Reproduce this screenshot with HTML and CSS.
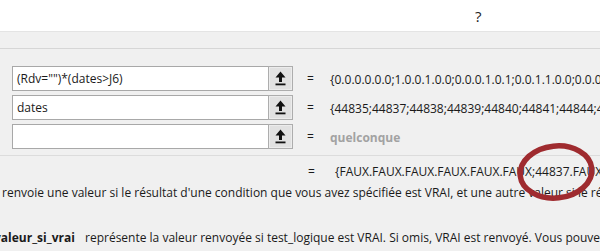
FILE: index.html
```html
<!DOCTYPE html>
<html lang="fr">
<head>
<meta charset="utf-8">
<title>Arguments de la fonction</title>
<link rel="stylesheet" href="styles.css">
</head>
<body>
<div class="dialog">
  <div class="top"><span class="help">?</span></div>
  <div class="band"></div>
  <div class="args">
    <div class="row">
      <div class="field"><span class="ftext">(Rdv="")*(dates&gt;J6)</span></div>
      <div class="pick"><svg width="11" height="15" viewBox="0 0 11 15"><path d="M5.5 0.5 L10.5 6.5 L7 6.5 L7 11 L4 11 L4 6.5 L0.5 6.5 Z" fill="#111"/><rect x="0.5" y="12.5" width="10" height="1.8" fill="#111"/></svg></div>
      <span class="eq">=</span>
      <span class="val">{0.0.0.0.0.0;1.0.0.1.0.0;0.0.0.1.0.1;0.0.1.1.0.0;0.0.0.0.0.0;0.0.0.0.0.0}</span>
    </div>
    <div class="row">
      <div class="field"><span class="ftext">dates</span></div>
      <div class="pick"><svg width="11" height="15" viewBox="0 0 11 15"><path d="M5.5 0.5 L10.5 6.5 L7 6.5 L7 11 L4 11 L4 6.5 L0.5 6.5 Z" fill="#111"/><rect x="0.5" y="12.5" width="10" height="1.8" fill="#111"/></svg></div>
      <span class="eq">=</span>
      <span class="val">{44835;44837;44838;44839;44840;44841;44844;44845;44846;44847}</span>
    </div>
    <div class="row">
      <div class="field"><span class="ftext"></span></div>
      <div class="pick"><svg width="11" height="15" viewBox="0 0 11 15"><path d="M5.5 0.5 L10.5 6.5 L7 6.5 L7 11 L4 11 L4 6.5 L0.5 6.5 Z" fill="#111"/><rect x="0.5" y="12.5" width="10" height="1.8" fill="#111"/></svg></div>
      <span class="eq">=</span>
      <span class="val any">quelconque</span>
    </div>
  </div>
  <div class="result"><span class="eq">=</span><span class="val">{FAUX.FAUX.FAUX.FAUX.FAUX.FAUX;44837.FAUX.FAUX.FAUX.FAUX.FAUX}</span></div>
  <p class="desc">renvoie une valeur si le résultat d'une condition que vous avez spécifiée est VRAI, et une autre valeur si le résultat est FAUX.</p>
  <p class="argdesc"><b class="argname">valeur_si_vrai</b><span class="argtext">représente la valeur renvoyée si test_logique est VRAI. Si omis, VRAI est renvoyé. Vous pouvez imbriquer jusqu'à sept fonctions SI.</span></p>
  <svg class="mark" width="100" height="80" viewBox="0 0 100 80"><ellipse cx="46" cy="37" rx="36" ry="26" transform="rotate(-6 46 37)" fill="none" stroke="#9f2b2f" stroke-width="5.5"/></svg>
</div>
</body>
</html>
```
FILE: styles.css
```css
html, body {
  margin: 0;
  padding: 0;
}
body {
  width: 600px;
  height: 251px;
  overflow: hidden;
  background: #f0f0f0;
  font-family: "Open Sans", "Noto Sans", sans-serif;
  font-size: 12px;
  color: #1a1a1a;
}
.dialog {
  position: relative;
  width: 600px;
  height: 251px;
  overflow: hidden;
}
.top {
  height: 31px;
  background: #ffffff;
  border-bottom: 1px solid #e4e4e4;
  display: flex;
  align-items: center;
  padding-left: 475px;
}
.help {
  font-size: 15px;
  line-height: 20px;
  color: #222;
}
.band {
  height: 16px;
  border-bottom: 1px solid #d6d6d6;
}
.args {
  padding: 17px 0 6px 12px;
  display: flex;
  flex-direction: column;
  gap: 4px;
  border-bottom: 1px solid #dcdcdc;
}
.row {
  display: flex;
  align-items: center;
  height: 25px;
  min-width: 0;
}
.field {
  flex: none;
  width: 256px;
  height: 25px;
  box-sizing: border-box;
  background: #fff;
  border: 1px solid #a8a8a8;
  border-right: none;
  display: flex;
  align-items: center;
  padding-left: 4px;
  padding-top: 1px;
}
.ftext {
  white-space: nowrap;
  line-height: 16px;
}
.pick {
  flex: none;
  width: 25px;
  height: 25px;
  box-sizing: border-box;
  border: 1px solid #adadad;
  background: #e1e1e1;
  box-shadow: inset 0 0 0 1px #ececec;
  display: flex;
  align-items: center;
  justify-content: center;
}
.eq {
  flex: none;
  width: 23px;
  margin-left: 14px;
  line-height: 16px;
}
.val {
  flex: none;
  white-space: nowrap;
  line-height: 16px;
  padding-top: 2px;
}
.any {
  color: #a2a2a2;
  font-weight: 700;
}
.result {
  display: flex;
  margin-top: 8px;
  padding-left: 308px;
  height: 16px;
  line-height: 16px;
}
.result .eq {
  width: 27px;
  margin-left: 0;
}
.result .val {
  padding-top: 0;
}
.desc {
  margin: 5px 0 0 2px;
  line-height: 16px;
  white-space: nowrap;
}
.argdesc {
  margin: 29px 0 0 -6px;
  line-height: 16px;
  white-space: nowrap;
  display: flex;
}
.argname {
  font-weight: 700;
  width: 91px;
  flex: none;
}
.mark {
  position: absolute;
  left: 510px;
  top: 135px;
}
```
